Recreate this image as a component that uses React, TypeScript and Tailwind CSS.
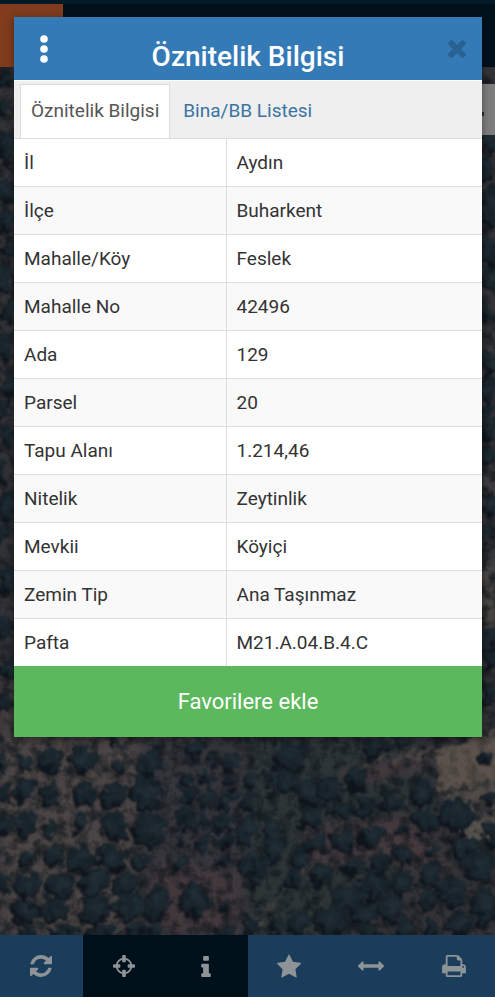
import type { ReactNode } from "react";

interface Attribute {
  label: string;
  value: string;
}

interface IconProps {
  viewBox: string;
  path: string;
  className: string;
}

interface Tool {
  label: string;
  dark?: boolean;
  icon: IconProps;
}

type Tree = [x: number, y: number, rx: number, ry: number];

const attributes: Attribute[] = [
  { label: "İl", value: "Aydın" },
  { label: "İlçe", value: "Buharkent" },
  { label: "Mahalle/Köy", value: "Feslek" },
  { label: "Mahalle No", value: "42496" },
  { label: "Ada", value: "129" },
  { label: "Parsel", value: "20" },
  { label: "Tapu Alanı", value: "1.214,46" },
  { label: "Nitelik", value: "Zeytinlik" },
  { label: "Mevkii", value: "Köyiçi" },
  { label: "Zemin Tip", value: "Ana Taşınmaz" },
  { label: "Pafta", value: "M21.A.04.B.4.C" },
];

const tools: Tool[] = [
  {
    label: "Yenile",
    icon: {
      viewBox: "0 128 1536 1536",
      className: "h-[22px] w-[22px]",
      path: "M1511 1056q0 5-1 7-64 268-268 434.5t-478 166.5q-146 0-282.5-55t-243.5-157l-129 129q-19 19-45 19t-45-19-19-45v-448q0-26 19-45t45-19h448q26 0 45 19t19 45-19 45l-137 137q71 66 161 102t187 36q134 0 250-65t186-179q11-17 53-117 8-23 30-23h192q13 0 22.5 9.5t9.5 22.5zm25-800v448q0 26-19 45t-45 19h-448q-26 0-45-19t-19-45 19-45l138-138q-148-137-349-137-134 0-250 65t-186 179q-11 17-53 117-8 23-30 23h-199q-13 0-22.5-9.5t-9.5-22.5v-7q65-268 270-434.5t480-166.5q146 0 284 55.5t245 156.5l130-129q19-19 45-19t45 19 19 45z",
    },
  },
  {
    label: "Konum",
    dark: true,
    icon: {
      viewBox: "0 0 1536 1536",
      className: "h-[22px] w-[22px]",
      path: "M1197 896h-109q-26 0-45-19t-19-45v-128q0-26 19-45t45-19h109q-32-108-112.5-188.5t-188.5-112.5v109q0 26-19 45t-45 19h-128q-26 0-45-19t-19-45v-109q-108 32-188.5 112.5t-112.5 188.5h109q26 0 45 19t19 45v128q0 26-19 45t-45 19h-109q32 108 112.5 188.5t188.5 112.5v-109q0-26 19-45t45-19h128q26 0 45 19t19 45v109q108-32 188.5-112.5t112.5-188.5zm339-192v128q0 26-19 45t-45 19h-143q-37 161-154.5 278.5t-278.5 154.5v143q0 26-19 45t-45 19h-128q-26 0-45-19t-19-45v-143q-161-37-278.5-154.5t-154.5-278.5h-143q-26 0-45-19t-19-45v-128q0-26 19-45t45-19h143q37-161 154.5-278.5t278.5-154.5v-143q0-26 19-45t45-19h128q26 0 45 19t19 45v143q161 37 278.5 154.5t154.5 278.5h143q26 0 45 19t19 45z",
    },
  },
  {
    label: "Bilgi",
    dark: true,
    icon: {
      viewBox: "0 128 640 1408",
      className: "h-[21px] w-[10px]",
      path: "M640 1344v128q0 26-19 45t-45 19h-512q-26 0-45-19t-19-45v-128q0-26 19-45t45-19h64v-384h-64q-26 0-45-19t-19-45v-128q0-26 19-45t45-19h384q26 0 45 19t19 45v576h64q26 0 45 19t19 45zm-128-1152v192q0 26-19 45t-45 19h-256q-26 0-45-19t-19-45v-192q0-26 19-45t45-19h256q26 0 45 19t19 45z",
    },
  },
  {
    label: "Favoriler",
    icon: {
      viewBox: "0 32 1664 1587",
      className: "h-6 w-6",
      path: "M1664 647q0 22-26 48l-363 354 86 500q1 7 1 20 0 21-10.5 35.5t-30.5 14.5q-19 0-40-12l-449-236-449 236q-22 12-40 12-21 0-31.5-14.5t-10.5-35.5q0-6 2-20l86-500-364-354q-25-27-25-48 0-37 56-46l502-73 225-455q19-41 49-41t49 41l225 455 502 73q56 9 56 46z",
    },
  },
  {
    label: "Ölçüm",
    icon: {
      viewBox: "0 576 1792 640",
      className: "h-[10px] w-[26px]",
      path: "M1792 896q0 26-19 45l-256 256q-19 19-45 19t-45-19-19-45v-128h-1024v128q0 26-19 45t-45 19-45-19l-256-256q-19-19-19-45t19-45l256-256q19-19 45-19t45 19 19 45v128h1024v-128q0-26 19-45t45-19 45 19l256 256q19 19 19 45z",
    },
  },
  {
    label: "Yazdır",
    icon: {
      viewBox: "0 128 1664 1536",
      className: "h-[22px] w-6",
      path: "M384 1536h896v-256h-896v256zm0-640h896v-384h-160q-40 0-68-28t-28-68v-160h-640v640zm1152 64q0-26-19-45t-45-19-45 19-19 45 19 45 45 19 45-19 19-45zm128 0v416q0 13-9.5 22.5t-22.5 9.5h-224v160q0 40-28 68t-68 28h-960q-40 0-68-28t-28-68v-160h-224q-13 0-22.5-9.5t-9.5-22.5v-416q0-79 56.5-135.5t135.5-56.5h64v-544q0-40 28-68t68-28h672q40 0 88 20t76 48l152 152q28 28 48 76t20 88v256h64q79 0 135.5 56.5t56.5 135.5z",
    },
  },
];

const closeIcon: IconProps = {
  viewBox: "110 366 1188 1188",
  className: "h-[18px] w-[18px]",
  path: "M1298 1322q0 40-28 68l-136 136q-28 28-68 28t-68-28l-294-294-294 294q-28 28-68 28t-68-28l-136-136q-28-28-28-68t28-68l294-294-294-294q-28-28-28-68t28-68l136-136q28-28 68-28t68 28l294 294 294-294q28-28 68-28t68 28l136 136q28 28 28 68t-28 68l-294 294 294 294q28 28 28 68z",
};

const trees: Tree[] = [
  // west orchard
  [2, 761, 6, 9], [24, 764, 8, 8], [50, 760, 13, 11], [83, 759, 15, 15], [115, 741, 5, 5], [119, 765, 7, 7],
  [3, 796, 7, 10], [24, 790, 11, 12], [50, 792, 9, 13], [84, 793, 12, 12], [114, 794, 14, 14], [149, 764, 12, 12],
  [146, 793, 17, 19], [4, 825, 8, 10], [25, 824, 12, 14], [50, 830, 6, 7], [79, 824, 8, 10], [113, 826, 14, 13],
  [149, 830, 18, 17], [27, 858, 9, 9], [54, 853, 10, 12], [82, 858, 15, 14], [112, 857, 16, 14], [140, 861, 10, 8],
  [3, 882, 8, 12], [26, 885, 13, 13], [60, 885, 16, 14], [94, 882, 17, 13], [127, 883, 14, 10], [25, 911, 14, 12],
  [54, 909, 19, 12], [94, 909, 16, 15], [126, 906, 15, 14], [156, 901, 12, 21], [196, 900, 15, 19], [28, 931, 12, 6],
  [64, 932, 14, 5], [100, 932, 16, 6], [135, 931, 13, 6], [153, 931, 10, 6], [225, 932, 8, 6],
  // middle grove
  [195, 748, 8, 9], [211, 757, 5, 8], [229, 761, 6, 9], [189, 778, 5, 8], [205, 779, 6, 7], [230, 781, 8, 8],
  [188, 795, 7, 7], [206, 797, 8, 11], [226, 800, 9, 9], [185, 816, 9, 12], [223, 821, 11, 10], [204, 821, 5, 6],
  [246, 829, 9, 18], [203, 841, 6, 6], [225, 842, 8, 6], [182, 838, 5, 6], [248, 802, 7, 9], [222, 862, 5, 4],
  [180, 863, 8, 7], [224, 906, 5, 5], [248, 866, 9, 12], [290, 756, 17, 17], [288, 782, 11, 12], [272, 780, 6, 14],
  [251, 780, 6, 7], [309, 792, 12, 14], [330, 788, 12, 12], [357, 778, 11, 11], [376, 746, 14, 10], [402, 742, 9, 6],
  [365, 805, 11, 11], [390, 801, 10, 14], [422, 793, 12, 14], [340, 811, 11, 9], [311, 818, 11, 11], [315, 843, 12, 12],
  [343, 840, 13, 12], [371, 834, 12, 11], [402, 828, 5, 6], [426, 821, 14, 11], [455, 814, 18, 18], [270, 829, 9, 13],
  [275, 848, 12, 14], [297, 860, 9, 10], [321, 873, 10, 12], [351, 866, 9, 8], [380, 862, 10, 9], [404, 855, 11, 9],
  [431, 850, 5, 5], [430, 874, 12, 13], [466, 846, 16, 13], [480, 866, 17, 19], [492, 832, 7, 14], [261, 863, 8, 11],
  [258, 879, 8, 8], [293, 879, 9, 9], [375, 886, 15, 14], [401, 883, 12, 14], [348, 898, 17, 14], [332, 919, 17, 17],
  [364, 914, 13, 12], [391, 907, 14, 14], [300, 923, 13, 13], [451, 891, 16, 14], [426, 899, 11, 10], [485, 906, 14, 18],
  [460, 923, 14, 12], [405, 928, 12, 9], [432, 928, 11, 8], [277, 927, 8, 7], [487, 757, 6, 6], [490, 796, 7, 7],
  [370, 931, 12, 6], [249, 924, 7, 12],
  // edges beside the dialog
  [6, 78, 7, 12], [3, 108, 6, 10], [6, 148, 9, 19], [6, 190, 10, 13], [4, 222, 9, 12], [10, 248, 6, 12],
  [3, 278, 8, 14], [10, 310, 6, 13], [4, 346, 8, 15], [9, 385, 8, 14], [3, 410, 7, 12], [8, 440, 7, 14],
  [3, 470, 5, 9], [8, 504, 8, 15], [2, 534, 7, 10], [8, 580, 8, 17], [3, 625, 9, 12], [9, 668, 8, 12],
  [3, 700, 8, 12], [489, 142, 9, 12], [487, 170, 9, 11], [490, 205, 11, 22], [487, 248, 9, 17], [490, 278, 9, 12],
  [485, 312, 5, 11], [490, 362, 9, 13], [488, 390, 8, 15], [488, 422, 10, 20], [487, 455, 8, 8], [490, 505, 8, 12],
  [484, 532, 6, 11], [489, 640, 9, 11], [488, 692, 9, 14], [491, 660, 7, 10],
];

function Icon({ viewBox, path, className }: IconProps) {
  return (
    <svg viewBox={viewBox} className={className} fill="currentColor" aria-hidden="true">
      <path d={path} />
    </svg>
  );
}

function OrchardMap() {
  return (
    <svg
      viewBox="0 67 495 868"
      preserveAspectRatio="xMidYMid slice"
      className="absolute inset-0 h-full w-full"
      aria-hidden="true"
    >
      <defs>
        <filter id="ragged" x="-5%" y="-5%" width="110%" height="110%" colorInterpolationFilters="sRGB">
          <feTurbulence type="fractalNoise" baseFrequency="0.09" numOctaves="4" seed="8" result="noise" />
          <feDisplacementMap in="SourceGraphic" in2="noise" scale="22" xChannelSelector="R" yChannelSelector="G" />
          <feGaussianBlur stdDeviation="1" />
        </filter>
        <filter id="soft" x="-5%" y="-5%" width="110%" height="110%" colorInterpolationFilters="sRGB">
          <feGaussianBlur stdDeviation="6" />
        </filter>
        <filter id="grain" x="0" y="0" width="100%" height="100%" colorInterpolationFilters="sRGB">
          <feTurbulence type="fractalNoise" baseFrequency="0.09" numOctaves="3" seed="3" />
          <feColorMatrix values="0 0 0 0 0.04  0 0 0 0 0.07  0 0 0 0 0.09  2.4 0 0 0 -0.95" />
        </filter>
      </defs>
      <rect y="67" width="495" height="868" fill="#333337" />
      <g filter="url(#soft)">
        <path d="M0 735h142v50l-8 75-12 75H0z" fill="#4a4444" />
        <path d="M140 735h120l60 200H150z" fill="#34353b" />
        <path d="M250 735h170l20 80-80 120H250z" fill="#2c3436" />
        <path d="M150 860l90 10v60l-85 5z" fill="#42383c" />
        <path d="M340 770l90-18v16l-85 20zM300 828l110-14 40 60-70-14-75 8z" fill="#44393d" />
        <path d="M0 735h14v-60H0zM482 350h13v40h-13zM482 455h13v40h-13z" fill="#453f40" />
        <path d="M482 560h13v70h-13z" fill="#504c47" />
      </g>
      <rect y="67" width="495" height="868" filter="url(#grain)" opacity="0.5" />
      <g filter="url(#ragged)">
        <path d="M436 752l64-20v48l-60 12z" fill="#5b524b" />
        <path d="M442 797l58-17v23l-47 8z" fill="#524c48" />
        <path d="M460 830l40-20v32l-33-2z" fill="#595650" />
        <path d="M362 766l70-15M305 865l-48 62" stroke="#4a4543" strokeWidth="4" />
      </g>
      <g filter="url(#ragged)">
        {trees.map(([x, y, rx, ry]) => (
          <g key={`${x}-${y}`}>
            <ellipse cx={x - 1} cy={y + 2} rx={rx * 0.95} ry={ry * 0.95} fill="#10151c" />
            <ellipse cx={x + 1} cy={y - 1} rx={rx * 0.9} ry={ry * 0.85} fill="#1b262e" />
            <ellipse cx={x + 2} cy={y - 2} rx={rx * 0.5} ry={ry * 0.4} fill="#202d34" />
          </g>
        ))}
      </g>
      <rect y="67" width="495" height="868" filter="url(#grain)" opacity="0.35" />
    </svg>
  );
}

function Tab({ active, children }: { active?: boolean; children: ReactNode }) {
  return (
    <button
      type="button"
      role="tab"
      aria-selected={Boolean(active)}
      className={
        active
          ? "border border-b-0 border-[#dddddd] bg-white px-[10px] text-[#555555]"
          : "px-[13px] text-[#3a74a3]"
      }
    >
      {children}
    </button>
  );
}

function AttributeDialog() {
  return (
    <section
      role="dialog"
      aria-labelledby="dialog-title"
      className="absolute top-[17px] right-[13px] left-[14px] bg-white shadow-[0_2px_8px_rgba(0,0,0,0.4)]"
    >
      <header className="grid h-[63px] grid-cols-[60px_1fr_60px] items-center bg-[#337ab7]">
        <button type="button" aria-label="Menü" className="flex justify-center text-white">
          <svg viewBox="0 0 8 28" className="h-7 w-2" fill="currentColor" aria-hidden="true">
            <circle cx="4" cy="4" r="3.8" />
            <circle cx="4" cy="14" r="3.8" />
            <circle cx="4" cy="24" r="3.8" />
          </svg>
        </button>
        <h1 id="dialog-title" className="pt-4 text-center text-[28px] leading-8 font-medium text-white">
          Öznitelik Bilgisi
        </h1>
        <button type="button" aria-label="Kapat" className="flex justify-end pr-4 text-[#296292]">
          <Icon {...closeIcon} />
        </button>
      </header>
      <div role="tablist" className="flex h-[58px] border-t border-white bg-[#efefef] pt-[3px] pl-[6px] text-[19px]">
        <Tab active>Öznitelik Bilgisi</Tab>
        <Tab>Bina/BB Listesi</Tab>
      </div>
      <table className="w-full table-fixed border-collapse text-left text-[19px] leading-[27px] text-[#333333]">
        <tbody>
          {attributes.map((attribute) => (
            <tr key={attribute.label} className="border-t border-[#dddddd] even:bg-[#f9f9f9]">
              <th scope="row" className="w-[212px] border-r border-[#dddddd] px-[10px] py-[10px] font-normal">
                {attribute.label}
              </th>
              <td className="px-[10px] py-[10px]">{attribute.value}</td>
            </tr>
          ))}
        </tbody>
      </table>
      <button type="button" className="block h-[71px] w-full bg-[#5cb85c] text-[22px] text-white">
        Favorilere ekle
      </button>
    </section>
  );
}

export default function App() {
  return (
    <main className="relative flex min-h-screen flex-col bg-white pb-[3px] font-['Roboto',sans-serif]">
      <header className="h-[67px] border-t-4 border-[#021a27] bg-[#00101b]">
        <div className="h-full w-[63px] bg-[#803c1d]" />
      </header>
      <div className="relative flex-1 overflow-hidden">
        <OrchardMap />
        <div className="absolute top-[17px] right-0 flex h-[51px] w-[14px] items-center bg-[#7d7d7d]">
          <span className="mt-2 h-1 w-[3px] bg-[#2b2b2b]" />
        </div>
      </div>
      <nav className="grid h-[62px] grid-cols-6 bg-[#00101b] text-[#8d9396]">
        {tools.map((tool) => (
          <button
            key={tool.label}
            type="button"
            aria-label={tool.label}
            className={`flex items-center justify-center ${tool.dark ? "bg-[#00101b]" : "bg-[#1a3d5b]"}`}
          >
            <Icon {...tool.icon} />
          </button>
        ))}
      </nav>
      <AttributeDialog />
    </main>
  );
}
